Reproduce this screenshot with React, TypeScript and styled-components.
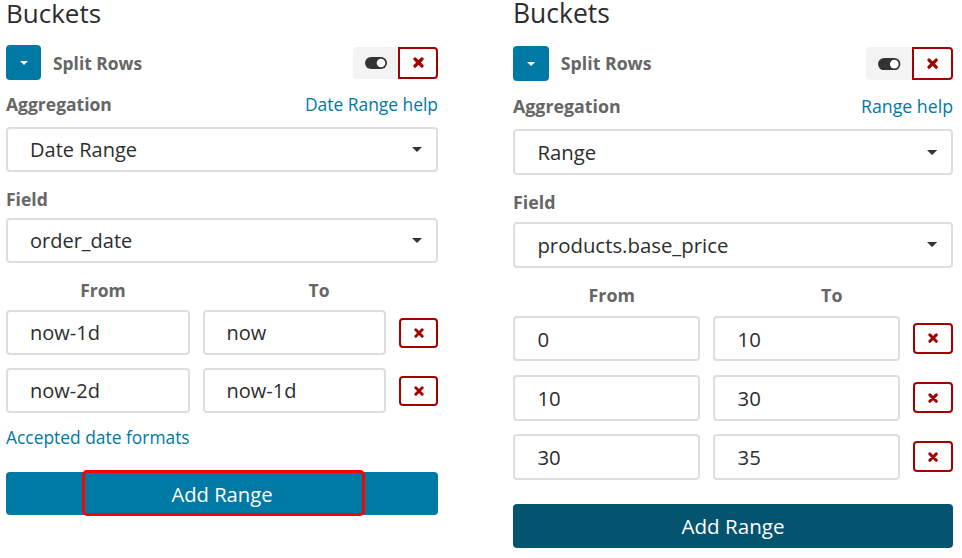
import React from 'react';
import styled, { createGlobalStyle } from 'styled-components';

const Global = createGlobalStyle`
  html, body { margin: 0; padding: 0; background: #fff; }
  body { font-family: "Open Sans", "Noto Sans", sans-serif; }
  * { box-sizing: border-box; }
`;

const Page = styled.div`
  display: flex;
  align-items: flex-start;
  gap: 75px;
  padding-left: 6px;
  width: 962px;
  height: 558px;
  overflow: hidden;
`;

const Panel = styled.section<{ $zoom?: number }>`
  width: 432px;
  display: flex;
  flex-direction: column;
  zoom: ${(p) => p.$zoom ?? 1};
`;

const Title = styled.h2`
  margin: -4px 0 0;
  font-size: 26px;
  line-height: 34px;
  font-weight: 400;
  color: #2d2d2d;
`;

const Header = styled.div`
  margin-top: 15px;
  height: 35px;
  display: flex;
  align-items: center;
`;

const CollapseBtn = styled.button`
  width: 35px;
  height: 35px;
  padding: 0;
  border: 0;
  border-radius: 4px;
  background: #0079a5;
  display: flex;
  align-items: center;
  justify-content: center;
`;

const HeaderTitle = styled.span`
  flex: 1;
  margin-left: 12px;
  font-size: 17.4px;
  line-height: 20px;
  font-weight: 700;
  color: #666;
`;

const BtnGroup = styled.div`
  display: flex;
  height: 32px;
`;

const GroupToggle = styled.button`
  width: 45px;
  height: 32px;
  padding: 0;
  border: 0;
  border-radius: 4px 0 0 4px;
  background: #f3f3f3;
  display: flex;
  align-items: center;
  justify-content: center;
`;

const DangerBtn = styled.button<{ $grouped?: boolean }>`
  width: ${(p) => (p.$grouped ? '40px' : '39px')};
  height: ${(p) => (p.$grouped ? '32px' : '30px')};
  padding: 0;
  background: #fff;
  border: 2px solid #a30000;
  border-radius: ${(p) => (p.$grouped ? '0 4px 4px 0' : '4px')};
  display: flex;
  align-items: center;
  justify-content: center;
`;

const LabelRow = styled.div<{ $top: number; $bottom: number }>`
  display: flex;
  justify-content: space-between;
  align-items: baseline;
  margin-top: ${(p) => p.$top}px;
  margin-bottom: ${(p) => p.$bottom}px;
  height: 20px;
`;

const Label = styled.span`
  font-size: 17.5px;
  line-height: 20px;
  font-weight: 700;
  color: #666;
`;

const HelpLink = styled.a<{ $top?: number }>`
  display: block;
  margin-top: ${(p) => p.$top ?? 0}px;
  font-size: 17.4px;
  line-height: 22px;
  color: #0079a5;
  text-decoration: none;
`;

const SelectBox = styled.div`
  height: 45px;
  border: 2px solid #dedede;
  border-radius: 4px;
  padding: 0 14px 0 22px;
  display: flex;
  align-items: center;
  justify-content: space-between;
  font-size: 20px;
  color: #2d2d2d;
`;

const RangeHead = styled.div`
  display: grid;
  grid-template-columns: 194px 1fr;
  margin-top: 17px;
  margin-bottom: 10px;
  height: 20px;
  text-align: center;
`;

const RangeGrid = styled.div`
  display: grid;
  grid-template-columns: 1fr 1fr 39px;
  column-gap: 13px;
  row-gap: 13px;
  align-items: center;
`;

const TextInput = styled.input`
  width: 100%;
  height: 45px;
  border: 2px solid #dedede;
  border-radius: 4px;
  padding: 0 0 0 22px;
  font-family: inherit;
  font-size: 20px;
  color: #2d2d2d;
  background: #fff;
  outline: none;
`;

const ButtonWrap = styled.div<{ $top: number }>`
  position: relative;
  margin-top: ${(p) => p.$top}px;
`;

const AddButton = styled.button<{ $dark?: boolean }>`
  width: 100%;
  height: 43px;
  border: 0;
  border-radius: 4px;
  background: ${(p) => (p.$dark ? '#045470' : '#0079a5')};
  color: #fff;
  font-family: inherit;
  font-size: 20.2px;
  display: flex;
  align-items: center;
  justify-content: center;
`;

const Highlight = styled.div`
  position: absolute;
  left: 76px;
  top: -2px;
  width: 283px;
  height: 46px;
  border: 3px solid #ff0000;
  border-radius: 5px;
  pointer-events: none;
`;

const CaretDown = ({ color, w = 10 }: { color: string; w?: number }) => (
  <svg width={w} height={w / 2} viewBox="0 0 10 5">
    <path d="M0 0 L10 0 L5 5 Z" fill={color} />
  </svg>
);

const XIcon = ({ size = 11 }: { size?: number }) => (
  <svg width={size} height={size} viewBox="0 0 11 11">
    <path d="M2 2 L9 9 M9 2 L2 9" stroke="#a30000" strokeWidth="3.2" strokeLinecap="round" />
  </svg>
);

const ToggleIcon = () => (
  <svg width="22" height="12" viewBox="0 0 22 12">
    <rect x="0" y="0" width="22" height="12" rx="6" fill="#333" />
    <circle cx="16" cy="6" r="4.3" fill="#fff" />
  </svg>
);

type RangeRow = [string, string];

type Props = {
  aggregation: string;
  help: string;
  field: string;
  rows: RangeRow[];
  dateLink?: boolean;
  highlight?: boolean;
  dark?: boolean;
  zoom?: number;
};

const BucketPanel = ({ aggregation, help, field, rows, dateLink, highlight, dark, zoom }: Props) => (
  <Panel $zoom={zoom}>
    <Title>Buckets</Title>
    <Header>
      <CollapseBtn aria-label="collapse">
        <CaretDown color="#fff" w={8} />
      </CollapseBtn>
      <HeaderTitle>Split Rows</HeaderTitle>
      <BtnGroup>
        <GroupToggle aria-label="toggle">
          <ToggleIcon />
        </GroupToggle>
        <DangerBtn $grouped aria-label="remove">
          <XIcon />
        </DangerBtn>
      </BtnGroup>
    </Header>
    <LabelRow $top={13} $bottom={14}>
      <Label>Aggregation</Label>
      <HelpLink>{help}</HelpLink>
    </LabelRow>
    <SelectBox>
      <span>{aggregation}</span>
      <CaretDown color="#333" />
    </SelectBox>
    <LabelRow $top={17} $bottom={9}>
      <Label>Field</Label>
    </LabelRow>
    <SelectBox>
      <span>{field}</span>
      <CaretDown color="#333" />
    </SelectBox>
    <RangeHead>
      <Label>From</Label>
      <Label>To</Label>
    </RangeHead>
    <RangeGrid>
      {rows.map(([from, to], i) => (
        <React.Fragment key={i}>
          <TextInput readOnly value={from} />
          <TextInput readOnly value={to} />
          <DangerBtn aria-label="remove range">
            <XIcon size={10} />
          </DangerBtn>
        </React.Fragment>
      ))}
    </RangeGrid>
    {dateLink && <HelpLink $top={13}>Accepted date formats</HelpLink>}
    <ButtonWrap $top={24}>
      <AddButton $dark={dark}>Add Range</AddButton>
      {highlight && <Highlight />}
    </ButtonWrap>
  </Panel>
);

export default function App() {
  return (
    <>
      <Global />
      <Page>
        <BucketPanel
          aggregation="Date Range"
          help="Date Range help"
          field="order_date"
          rows={[
            ['now-1d', 'now'],
            ['now-2d', 'now-1d'],
          ]}
          dateLink
          highlight
        />
        <BucketPanel
          aggregation="Range"
          help="Range help"
          field="products.base_price"
          rows={[
            ['0', '10'],
            ['10', '30'],
            ['30', '35'],
          ]}
          dark
          zoom={1.0185}
        />
      </Page>
    </>
  );
}
